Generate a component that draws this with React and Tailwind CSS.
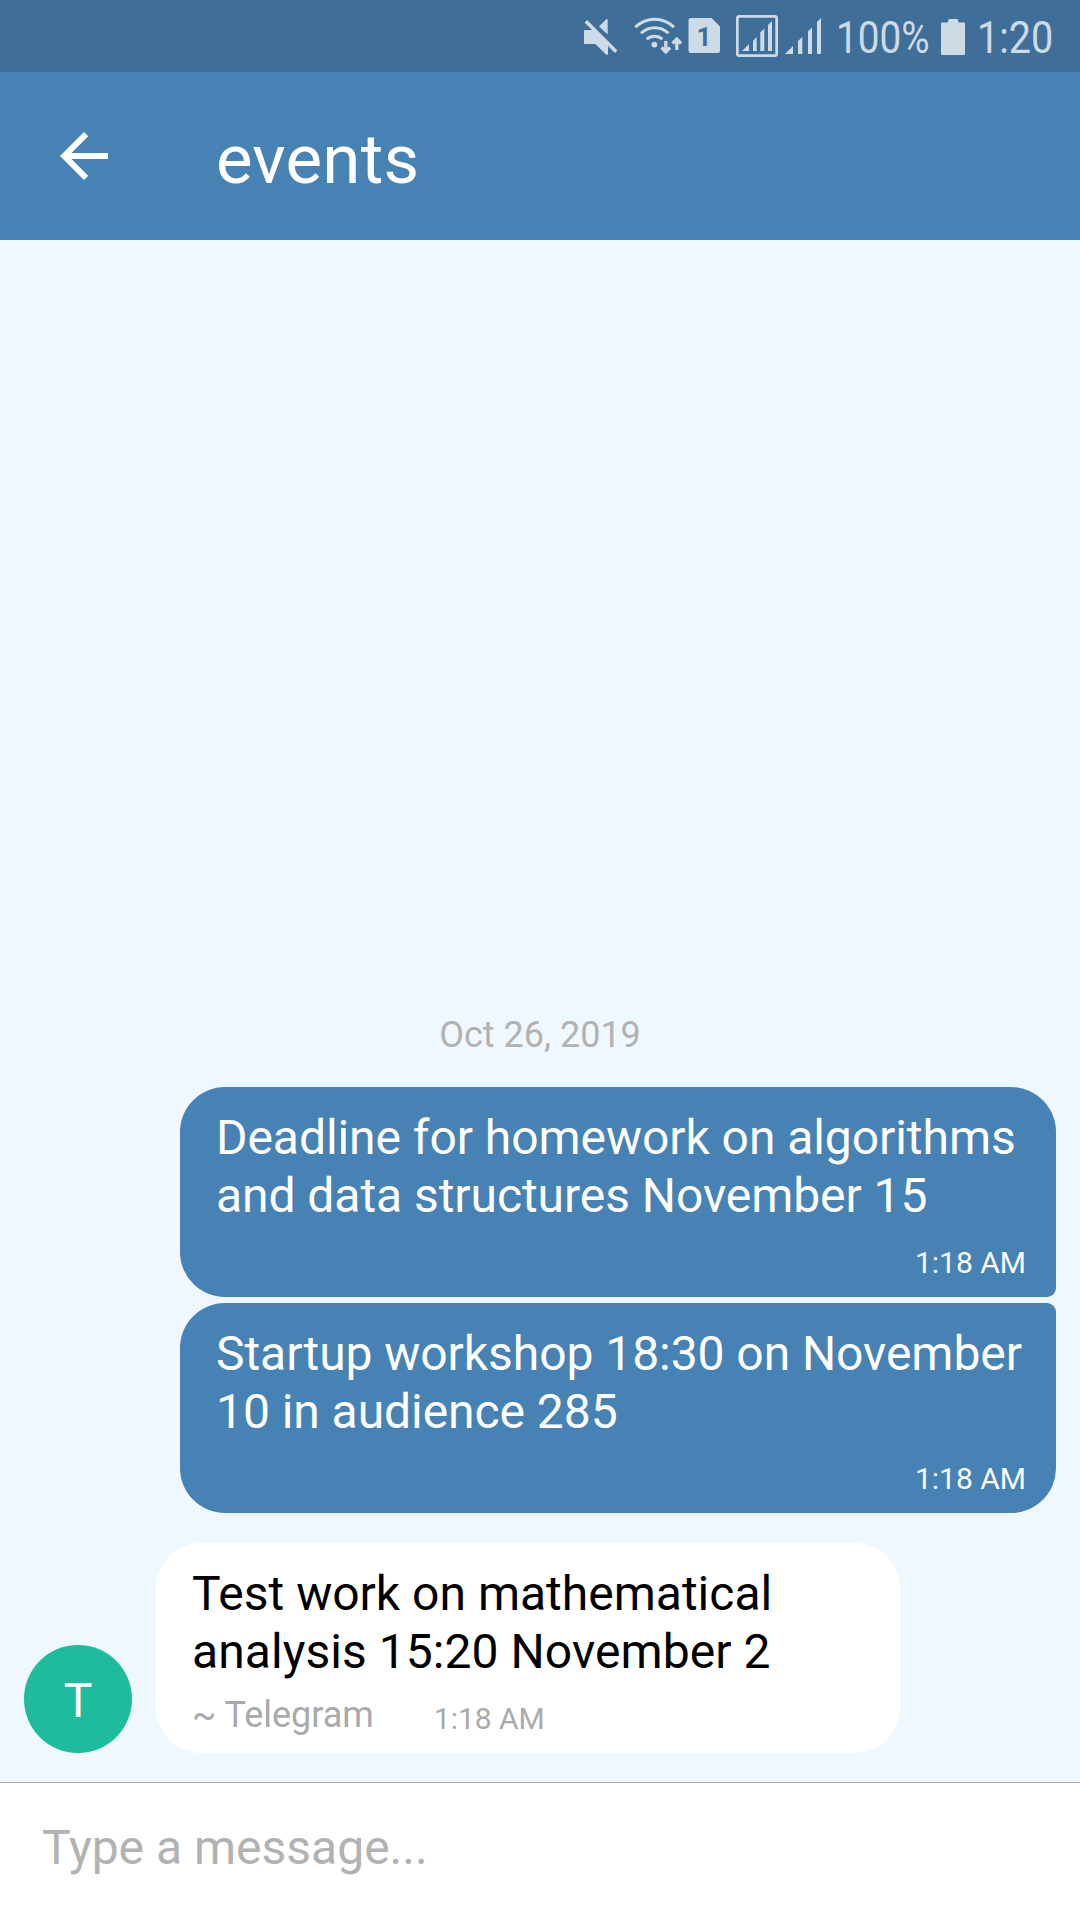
const messages = [
  {
    lines: ['Deadline for homework on algorithms', 'and data structures November 15'],
    time: '1:18 AM',
    shape: 'rounded-[45px] rounded-br-[9px]',
  },
  {
    lines: ['Startup workshop 18:30 on November', '10 in audience 285'],
    time: '1:18 AM',
    shape: 'rounded-[45px] rounded-tr-[9px]',
  },
];

function StatusBar() {
  return (
    <div className="flex h-[72px] items-start bg-[#3f6f98] pl-[584px] text-[#cddbe7]">
      <svg className="h-[72px] w-[34px] shrink-0" viewBox="584 0 34 72" fill="currentColor">
        <path d="M584 31q0-1 1-1H594L608 44V54.5q-1 .5-2 0L595.500 44H585q-1 0-1-1z" />
        <path d="M599 26.500L606 19.500q1.700-1 1.700 0V34.500z" />
        <path d="M585.800 21.300L616.200 51.700" stroke="currentColor" strokeWidth="3.600" />
      </svg>
      <svg className="ml-4 h-[72px] w-[50px] shrink-0" viewBox="634 0 50 72" fill="none" stroke="currentColor" strokeWidth="3">
        <path d="M635.300 27.300A27 27 0 0 1 674 27.300" />
        <path d="M641 33.300A19.500 19.500 0 0 1 668.500 33.300" />
        <path d="M646.600 39.200A12 12 0 0 1 662.400 39.200" />
        <circle cx="654.400" cy="44.600" r="2.900" fill="currentColor" stroke="none" />
        <path d="M665.800 41V51.500M661.500 47.500L665.800 51.800L670.100 47.500M676.800 50V39.500M672.500 43.500L676.800 39.200L681.100 43.500" strokeWidth="3.300" />
      </svg>
      <svg className="ml-1 h-[72px] w-[32px] shrink-0" viewBox="688 0 32 72" fill="currentColor">
        <path d="M691 18H711.500L720 26.500V50.500q0 2.500-2.500 2.500H691q-2.500 0-2.500-2.500V20.500q0-2.500 2.500-2.500z" />
        <text x="704" y="46" textAnchor="middle" className="fill-[#3f6f98] text-[26px] font-bold">1</text>
      </svg>
      <svg className="ml-4 h-[72px] w-[42px] shrink-0" viewBox="736 0 42 72" fill="currentColor">
        <rect x="737.300" y="16.300" width="39.400" height="39.400" rx="2" fill="none" stroke="currentColor" strokeWidth="2.800" />
        <path d="M742 51L749 44V51zM753 51V41L756.700 37V51zM760.300 51V32.500L764.300 28.500V51zM768 51V25L772 21V51z" />
      </svg>
      <svg className="ml-[7px] h-[72px] w-[37px] shrink-0" viewBox="785 0 37 72" fill="currentColor">
        <path d="M785 54L793 46V54zM798 54V41L802.300 37V54zM808 54V31.500L812 27.500V54zM817 54V22L821 18V54z" />
      </svg>
      <span className="ml-[14px] mt-2 w-[92px] origin-left scale-x-[0.86] whitespace-nowrap text-[45px] leading-[60px]">100%</span>
      <svg className="ml-[13px] h-[72px] w-6 shrink-0" viewBox="941 0 24 72" fill="currentColor">
        <path d="M949 19H957.500L958.700 22.500H964Q965 22.500 965 23.500V54Q965 55 964 55H942Q941 55 941 54V23.500Q941 22.500 942 22.500H947.500z" />
      </svg>
      <span className="ml-3 mt-2 origin-left scale-x-[0.88] whitespace-nowrap text-[45px] leading-[60px]">1:20</span>
    </div>
  );
}

function Header() {
  return (
    <header className="flex h-[168px] items-start bg-[#4682b4] text-white">
      <svg className="ml-12 mt-12 size-[72px]" viewBox="0 0 24 24" fill="currentColor">
        <path d="M20 11H7.830l5.590-5.590L12 4l-8 8 8 8 1.410-1.410L7.830 13H20v-2z" />
      </svg>
      <h1 className="ml-24 mt-[46px] text-[69px] leading-[84px] tracking-[0.2px]">events</h1>
    </header>
  );
}

function OutgoingMessage({ lines, time, shape }) {
  return (
    <div className={`ml-[180px] h-[210px] w-[876px] bg-[#4682b4] pl-9 pr-[30px] pt-[22px] text-white ${shape}`}>
      {lines.map((line) => (
        <p key={line} className="whitespace-nowrap text-[48px] leading-[58px] tracking-[-0.06px]">{line}</p>
      ))}
      <p className="mt-5 text-right text-[30px] leading-[36px]">{time}</p>
    </div>
  );
}

export default function App() {
  return (
    <div className="flex h-[1920px] w-[1080px] flex-col overflow-hidden bg-[#f0f8ff] font-['Roboto',sans-serif]">
      <StatusBar />
      <Header />
      <main className="flex flex-1 flex-col justify-end pb-[29px]">
        <p className="mb-[30px] text-center text-[36px] leading-[44px] text-[#b2b2b2]">Oct 26, 2019</p>
        <div className="flex flex-col gap-1.5">
          {messages.map((message) => (
            <OutgoingMessage key={message.lines[0]} {...message} />
          ))}
        </div>
        <div className="ml-6 mt-[30px] flex items-end gap-6">
          <div className="flex size-[108px] items-center justify-center rounded-full bg-[#1dbc9c] pt-1 text-[48px] text-white">T</div>
          <div className="h-[210px] w-[744px] rounded-[45px] bg-white pl-9 pt-[22px] text-black">
            <p className="text-[48px] leading-[58px]">Test work on mathematical</p>
            <p className="text-[48px] leading-[58px] tracking-[0.06px]">analysis 15:20 November 2</p>
            <div className="mt-3 flex items-start text-[#aaaaaa]">
              <span className="text-[36px] leading-[44px] tracking-[-0.05px]">~ Telegram</span>
              <span className="ml-[60px] mt-2 text-[30px] leading-[36px]">1:18 AM</span>
            </div>
          </div>
        </div>
      </main>
      <footer className="h-[138px] border-t border-[#b2b2b2] bg-white pl-[42px] pt-9">
        <p className="text-[48px] leading-[58px] text-[#b2b2b2]">Type a message...</p>
      </footer>
    </div>
  );
}
